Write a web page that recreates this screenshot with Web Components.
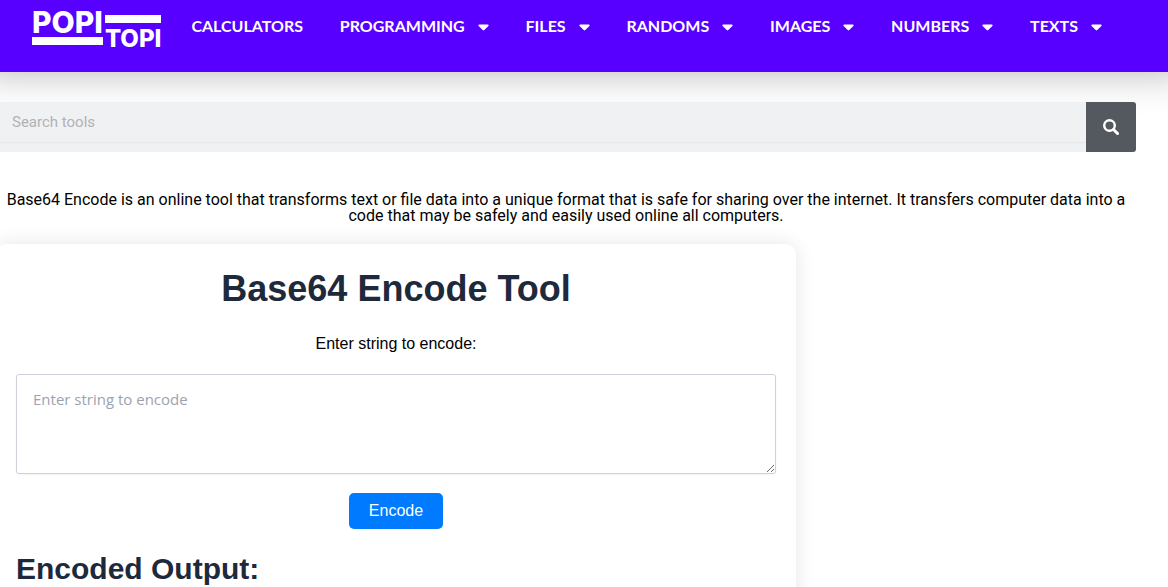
<!DOCTYPE html>
<html lang="en">
<head>
<meta charset="utf-8">
<meta name="viewport" content="width=device-width, initial-scale=1">
<title>Base64 Encode - PopiTopi</title>
<style>
  body {
    margin: 0;
    background: #fff;
    color: #000;
    font-family: Roboto, "Liberation Sans", sans-serif;
    font-size: 16px;
    overflow-x: hidden;
  }
  main {
    display: flex;
    flex-direction: column;
    margin: 30px 32px 0 -4px;
  }
  .intro {
    margin: 40px 0 20px;
    padding: 0 8px;
    font-weight: 400;
    line-height: 16px;
    text-align: center;
  }
</style>
</head>
<body>
<site-header>
  <nav-item href="#calculators">CALCULATORS</nav-item>
  <nav-item menu>PROGRAMMING</nav-item>
  <nav-item menu>FILES</nav-item>
  <nav-item menu>RANDOMS</nav-item>
  <nav-item menu>IMAGES</nav-item>
  <nav-item menu>NUMBERS</nav-item>
  <nav-item menu>TEXTS</nav-item>
</site-header>
<main>
  <search-bar placeholder="Search tools"></search-bar>
  <p class="intro">Base64 Encode is an online tool that transforms text or file data into a unique format that is safe for sharing over the internet. It transfers computer data into a code that may be safely and easily used online all computers.</p>
  <encode-tool>
    <span slot="title">Base64 Encode Tool</span>
    <span slot="label">Enter string to encode:</span>
    <span slot="action">Encode</span>
    <span slot="result">Encoded Output:</span>
  </encode-tool>
</main>

<script>
class SiteLogo extends HTMLElement {
  constructor() {
    super();
    this.attachShadow({ mode: "open" });
  }

  connectedCallback() {
    this.shadowRoot.innerHTML = /*html*/ `
    <style>
      :host {
        display: block;
        flex: none;
      }
      a {
        display: flex;
        gap: 2px;
        color: #fff;
        font-family: Inter, "Liberation Sans", sans-serif;
        font-weight: 800;
        text-decoration: none;
      }
      .left, .right {
        display: flex;
        flex-direction: column;
      }
      .left { gap: 4px; font-size: 30px; line-height: 22px; }
      .right { gap: 7px; padding-top: 4px; font-size: 24px; line-height: 17px; }
      .bar { height: 8px; background: #fff; }
    </style>
    <a href="#home">
      <span class="left"><span>POPI</span><span class="bar"></span></span>
      <span class="right"><span class="bar"></span><span>TOPI</span></span>
    </a>
    `;
  }
}

class SiteHeader extends HTMLElement {
  constructor() {
    super();
    this.attachShadow({ mode: "open" });
  }

  connectedCallback() {
    this.shadowRoot.innerHTML = /*html*/ `
    <style>
      :host { display: block; }
      header {
        display: flex;
        align-items: flex-start;
        gap: 30px;
        height: 72px;
        box-sizing: border-box;
        padding: 11px 66px 0 32px;
        background: #5800ff;
        box-shadow: 0 -20px 40px 20px rgba(0, 0, 0, .3);
      }
      nav {
        display: flex;
        flex: 1;
        justify-content: space-between;
        padding-top: 3px;
      }
    </style>
    <header>
      <site-logo></site-logo>
      <nav aria-label="Main"><slot></slot></nav>
    </header>
    `;
  }
}

class NavItem extends HTMLElement {
  constructor() {
    super();
    this.attachShadow({ mode: "open" });
  }

  connectedCallback() {
    const caret = '<svg width="11" height="7" viewBox="0 0 11 7" aria-hidden="true"><path d="M1.2.5h8.6c.8 0 1.1.9.6 1.4L6.3 6.1c-.5.5-1.1.5-1.6 0L.6 1.9C.1 1.4.4.5 1.2.5z" fill="#fff"/></svg>';
    const item = this.hasAttribute("menu")
      ? `<button type="button" aria-haspopup="true"><slot></slot>${caret}</button>`
      : `<a href="${this.getAttribute("href")}"><slot></slot></a>`;

    this.shadowRoot.innerHTML = /*html*/ `
    <style>
      :host { display: block; }
      a, button {
        display: flex;
        align-items: center;
        gap: 13px;
        margin: 0;
        padding: 0;
        border: 0;
        background: none;
        color: #fff;
        font: 700 16px/24px Lato, "Open Sans", sans-serif;
        text-decoration: none;
        white-space: nowrap;
        cursor: pointer;
      }
      svg { margin-top: 3px; }
    </style>
    ${item}
    `;
  }
}

class SearchBar extends HTMLElement {
  constructor() {
    super();
    this.attachShadow({ mode: "open" });
  }

  connectedCallback() {
    this.shadowRoot.innerHTML = /*html*/ `
    <style>
      :host { display: block; }
      form {
        display: flex;
        align-items: flex-start;
        height: 50px;
        border-radius: 3px;
        background: #f0f1f3;
        overflow: hidden;
      }
      input {
        flex: 1;
        min-width: 0;
        height: 40px;
        box-sizing: border-box;
        padding: 0 16px;
        border: 0;
        border-radius: 3px;
        background: none;
        box-shadow: 0 1px 2px rgba(0, 0, 0, .05);
        color: #333;
        font: 400 15px Roboto, sans-serif;
      }
      input::placeholder { color: #b1b2b3; opacity: 1; }
      button {
        display: grid;
        place-content: center;
        width: 50px;
        height: 50px;
        padding: 0;
        border: 0;
        background: #54595f;
        cursor: pointer;
      }
    </style>
    <form role="search">
      <input type="search" aria-label="Search" placeholder="${this.getAttribute("placeholder")}">
      <button type="button" aria-label="Search">
        <svg width="16" height="16" viewBox="0 0 16 16" fill="none" stroke="#fff" aria-hidden="true">
          <circle cx="6.5" cy="6.5" r="5.3" stroke-width="2.4"/>
          <path d="M10.5 10.5l4 4" stroke-width="3" stroke-linecap="round"/>
        </svg>
      </button>
    </form>
    `;
  }
}

class EncodeTool extends HTMLElement {
  $input = null;
  $output = null;

  constructor() {
    super();
    this.attachShadow({ mode: "open" });
  }

  connectedCallback() {
    this.render();
    this.$input = this.shadowRoot.querySelector("#source");
    this.$output = this.shadowRoot.querySelector("#output");
    this.shadowRoot.querySelector("button").addEventListener("click", () => this.encode());
  }

  encode() {
    const bytes = new TextEncoder().encode(this.$input.value);
    this.$output.textContent = btoa(String.fromCharCode(...bytes));
  }

  render() {
    this.shadowRoot.innerHTML = /*html*/ `
    <style>
      :host {
        display: flex;
        flex-direction: column;
        max-width: 800px;
        box-sizing: border-box;
        padding: 20px;
        border-radius: 10px;
        background: #fff;
        box-shadow: 0 0 20px rgba(0, 0, 0, .1);
        font-family: "Liberation Sans", Arial, sans-serif;
      }
      h1, h2 {
        margin: 0;
        color: #1e293b;
        font-weight: 700;
      }
      h1 { font-size: 36px; line-height: 50px; text-align: center; }
      h2 { font-size: 30px; line-height: 40px; }
      label {
        margin: 18px 0;
        line-height: 24px;
        text-align: center;
      }
      textarea {
        height: 100px;
        box-sizing: border-box;
        margin: 0 0 19px;
        padding: 12px 16px;
        border: 1px solid #cfd0dc;
        border-radius: 3px;
        box-shadow: 0 1px 2px rgba(0, 0, 0, .05);
        font: 400 15px/24px "Open Sans", "Noto Sans", sans-serif;
        resize: vertical;
      }
      textarea::placeholder { color: #9ca3af; opacity: 1; }
      button {
        align-self: center;
        height: 36px;
        margin: 0 0 20px;
        padding: 0 20px;
        border: 0;
        border-radius: 5px;
        background: #007bff;
        color: #fff;
        font: inherit;
        cursor: pointer;
      }
      output {
        min-height: 24px;
        overflow-wrap: anywhere;
      }
    </style>
    <h1><slot name="title"></slot></h1>
    <label for="source"><slot name="label"></slot></label>
    <textarea id="source" placeholder="Enter string to encode"></textarea>
    <button type="button"><slot name="action"></slot></button>
    <h2><slot name="result"></slot></h2>
    <output id="output" for="source"></output>
    `;
  }
}

window.customElements.define("site-logo", SiteLogo);
window.customElements.define("nav-item", NavItem);
window.customElements.define("site-header", SiteHeader);
window.customElements.define("search-bar", SearchBar);
window.customElements.define("encode-tool", EncodeTool);
</script>
</body>
</html>
